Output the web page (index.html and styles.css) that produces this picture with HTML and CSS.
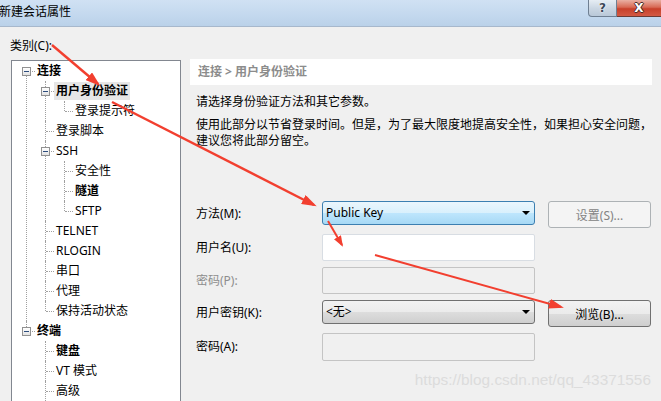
FILE: index.html
```html
<!DOCTYPE html>
<html lang="zh-CN">
<head>
<meta charset="utf-8">
<title>新建会话属性</title>
<link rel="stylesheet" href="styles.css">
</head>
<body>
<div class="window">
  <div class="titlebar">
    <span class="title">新建会话属性</span>
    <div class="caption-btns">
      <span class="cbtn help">?</span>
      <span class="cbtn close">X</span>
    </div>
  </div>
  <div class="content">
    <div class="left">
      <div class="cat-label">类别(C):</div>
      <div class="treebox">
        <ul class="tree">
          <li>
            <div class="node"><span class="exp"></span><span class="lbl b">连接</span></div>
            <ul>
              <li>
                <div class="node"><span class="exp"></span><span class="lbl b sel">用户身份验证</span></div>
                <ul>
                  <li class="last"><div class="node"><span class="lbl">登录提示符</span></div></li>
                </ul>
              </li>
              <li><div class="node"><span class="lbl">登录脚本</span></div></li>
              <li>
                <div class="node"><span class="exp"></span><span class="lbl">SSH</span></div>
                <ul>
                  <li><div class="node"><span class="lbl">安全性</span></div></li>
                  <li><div class="node"><span class="lbl b">隧道</span></div></li>
                  <li class="last"><div class="node"><span class="lbl">SFTP</span></div></li>
                </ul>
              </li>
              <li><div class="node"><span class="lbl">TELNET</span></div></li>
              <li><div class="node"><span class="lbl">RLOGIN</span></div></li>
              <li><div class="node"><span class="lbl">串口</span></div></li>
              <li><div class="node"><span class="lbl">代理</span></div></li>
              <li class="last"><div class="node"><span class="lbl">保持活动状态</span></div></li>
            </ul>
          </li>
          <li class="last">
            <div class="node"><span class="exp"></span><span class="lbl b">终端</span></div>
            <ul>
              <li><div class="node"><span class="lbl b">键盘</span></div></li>
              <li><div class="node"><span class="lbl">VT 模式</span></div></li>
              <li><div class="node"><span class="lbl">高级</span></div></li>
            </ul>
          </li>
        </ul>
      </div>
    </div>
    <div class="right">
      <div class="crumb">连接 &gt; 用户身份验证</div>
      <p class="p1">请选择身份验证方法和其它参数。</p>
      <p class="p2">使用此部分以节省登录时间。但是，为了最大限度地提高安全性，如果担心安全问题，<br>建议您将此部分留空。</p>
      <div class="form">
        <div class="frow c">
          <label>方法(M):</label>
          <div class="combo focus"><span>Public Key</span><span class="arrow"></span></div>
          <button class="btn disabled">设置(S)...</button>
        </div>
        <div class="frow">
          <label>用户名(U):</label>
          <div class="field"></div>
        </div>
        <div class="frow">
          <label class="dis">密码(P):</label>
          <div class="field off"></div>
        </div>
        <div class="frow c">
          <label>用户密钥(K):</label>
          <div class="combo"><span>&lt;无&gt;</span><span class="arrow"></span></div>
          <button class="btn">浏览(B)...</button>
        </div>
        <div class="frow">
          <label>密码(A):</label>
          <div class="field off tall"></div>
        </div>
      </div>
      <div class="watermark">https://blog.csdn.net/qq_43371556</div>
    </div>
  </div>
  <svg class="arrows" width="661" height="401" viewBox="0 0 661 401">
    <defs>
      <marker id="ah" markerWidth="15" markerHeight="10" refX="12" refY="5" orient="auto" markerUnits="userSpaceOnUse">
        <path d="M0,0 L15,5 L0,10 Z" fill="#f23f2f"/>
      </marker>
      <marker id="ahs" markerWidth="11" markerHeight="8" refX="9" refY="4" orient="auto" markerUnits="userSpaceOnUse">
        <path d="M0,0 L11,4 L0,8 Z" fill="#f23f2f"/>
      </marker>
    </defs>
    <line x1="52" y1="45" x2="98" y2="84" stroke="#f23f2f" stroke-width="2.4" marker-end="url(#ah)"/>
    <line x1="112" y1="102" x2="314" y2="205" stroke="#f23f2f" stroke-width="2.4" marker-end="url(#ah)"/>
    <line x1="328" y1="221" x2="342" y2="245" stroke="#f23f2f" stroke-width="2" marker-end="url(#ahs)"/>
    <line x1="375" y1="255" x2="561" y2="307" stroke="#f23f2f" stroke-width="2" marker-end="url(#ah)"/>
  </svg>
</div>
</body>
</html>
```

FILE: styles.css
```css
html, body {
  margin: 0;
  padding: 0;
}
body {
  background: #f0f0f0;
  font-family: "Noto Sans", "Noto Sans CJK SC", sans-serif;
  font-size: 12px;
  color: #000;
  overflow: hidden;
}
.window {
  position: relative;
  width: 661px;
  height: 401px;
  overflow: hidden;
}

/* title bar */
.titlebar {
  height: 26px;
  border-bottom: 1px solid #a7b8cc;
  background: linear-gradient(to bottom, #d0e1f3 0%, #c3d8ee 60%, #bad1e9 100%);
  display: flex;
  align-items: flex-start;
}
.title {
  line-height: 24px;
  margin-left: -1px;
  font-size: 12px;
}
.caption-btns {
  margin-left: auto;
  display: flex;
}
.cbtn {
  height: 17px;
  box-sizing: border-box;
  display: flex;
  align-items: center;
  justify-content: center;
  font-family: "DejaVu Sans", sans-serif;
  font-weight: bold;
  font-size: 12px;
  line-height: 1;
}
.help {
  width: 29px;
  border: 1px solid #6f7f92;
  border-top: 0;
  border-radius: 0 0 0 4px;
  background: linear-gradient(to bottom, #e6edf4, #c9d5e2 55%, #b9c8d8);
  color: #3b4858;
  text-shadow: 0 0 1px #fff, 0 0 2px #fff;
}
.close {
  width: 44px;
  border-bottom: 1px solid #6c3a33;
  background: linear-gradient(to bottom, #eab0a3 0%, #d86a55 45%, #c8402a 55%, #d35a44 100%);
  color: #fff;
  text-shadow: 1px 0 0 #4a2a25, -1px 0 0 #4a2a25, 0 1px 0 #4a2a25, 0 -1px 0 #4a2a25;
}

/* content */
.content {
  display: flex;
  padding: 11px 0 0 10px;
}
.left {
  width: 171px;
  flex: none;
}
.cat-label {
  height: 16px;
  line-height: 16px;
  margin-bottom: 6px;
}
.treebox {
  margin-left: 1px;
  width: 170px;
  height: 345px;
  box-sizing: border-box;
  border: 1px solid #828790;
  background: #fff;
  overflow: hidden;
}

/* tree */
.tree, .tree ul {
  list-style: none;
  margin: 0;
  padding: 0;
}
.tree ul {
  padding-left: 19px;
}
.tree li {
  position: relative;
}
.tree li::before {
  content: "";
  position: absolute;
  left: 14px;
  top: 0;
  bottom: 0;
  border-left: 1px dotted #a0a0a0;
}
.tree li.last::before {
  bottom: auto;
  height: 10px;
}
.tree > li:first-child::before {
  top: 10px;
}
.node {
  position: relative;
  height: 20px;
  display: flex;
  align-items: center;
  padding-left: 23px;
  white-space: nowrap;
}
.node::before {
  content: "";
  position: absolute;
  left: 15px;
  top: 10px;
  width: 8px;
  border-top: 1px dotted #a0a0a0;
}
.exp {
  position: absolute;
  left: 10px;
  top: 6px;
  width: 9px;
  height: 9px;
  box-sizing: border-box;
  border: 1px solid #919191;
  background: linear-gradient(to bottom, #ffffff, #e2e2e2);
  z-index: 1;
}
.exp::after {
  content: "";
  position: absolute;
  left: 1px;
  top: 3px;
  width: 5px;
  height: 1px;
  background: #2c4c7c;
}
.lbl {
  padding: 0 2px;
  line-height: 18px;
}
.lbl.b {
  font-weight: bold;
}
.lbl.sel {
  background: #e6e6e6;
}

/* right panel */
.right {
  margin-left: 9px;
  margin-top: 21px;
  width: 462px;
  flex: none;
}
.crumb {
  height: 26px;
  line-height: 26px;
  background: #fff;
  padding-left: 8px;
  color: #8c8c8c;
  font-weight: bold;
}
.p1 {
  margin: 9px 0 0 6px;
  line-height: 16px;
}
.p2 {
  margin: 7px 0 0 6px;
  line-height: 16px;
  white-space: nowrap;
}
.form {
  margin-top: 52px;
  padding-left: 6px;
  display: flex;
  flex-direction: column;
  gap: 6px;
}
.frow {
  display: flex;
  align-items: flex-start;
}
.frow label {
  width: 126px;
  flex: none;
  line-height: 27px;
}
.frow.c label {
  line-height: 26px;
}
.frow label.dis {
  color: #8d8d8d;
}
.combo {
  width: 213px;
  height: 24px;
  box-sizing: border-box;
  border: 1px solid #707070;
  border-radius: 3px;
  background: linear-gradient(to bottom, #f2f2f2 0%, #ebebeb 50%, #dddddd 50%, #cfcfcf 100%);
  display: flex;
  align-items: center;
  padding-left: 3px;
  line-height: 22px;
}
.combo.focus {
  border-color: #3c7fb1;
  background: linear-gradient(to bottom, #eaf6fd 0%, #d9f0fc 50%, #bee6fd 50%, #a7d9f5 100%);
}
.arrow {
  margin-left: auto;
  margin-right: 4px;
  width: 0;
  height: 0;
  border-top: 4px solid #000;
  border-left: 4px solid transparent;
  border-right: 4px solid transparent;
}
.btn {
  margin-left: 13px;
  width: 103px;
  height: 27px;
  box-sizing: border-box;
  border: 1px solid #707070;
  border-radius: 3px;
  background: linear-gradient(to bottom, #f2f2f2 0%, #ebebeb 50%, #dddddd 50%, #cfcfcf 100%);
  font-family: inherit;
  font-size: 12px;
  color: #000;
  padding: 0;
}
.btn.disabled {
  border-color: #adb2b5;
  background: #f4f4f4;
  color: #838383;
}
.field {
  width: 213px;
  height: 27px;
  box-sizing: border-box;
  border: 1px solid #d8dde3;
  border-radius: 2px;
  background: #fff;
}
.field.off {
  background: #f0f0f0;
  border-color: #c4c4c4;
}
.field.tall {
  height: 28px;
}
.watermark {
  margin-top: 10px;
  margin-right: 1px;
  text-align: right;
  font-family: "Liberation Sans", sans-serif;
  font-size: 15.4px;
  line-height: 18px;
  color: #dcdcdc;
  white-space: nowrap;
}

/* annotation arrows */
.arrows {
  position: absolute;
  left: 0;
  top: 0;
  pointer-events: none;
}
```
